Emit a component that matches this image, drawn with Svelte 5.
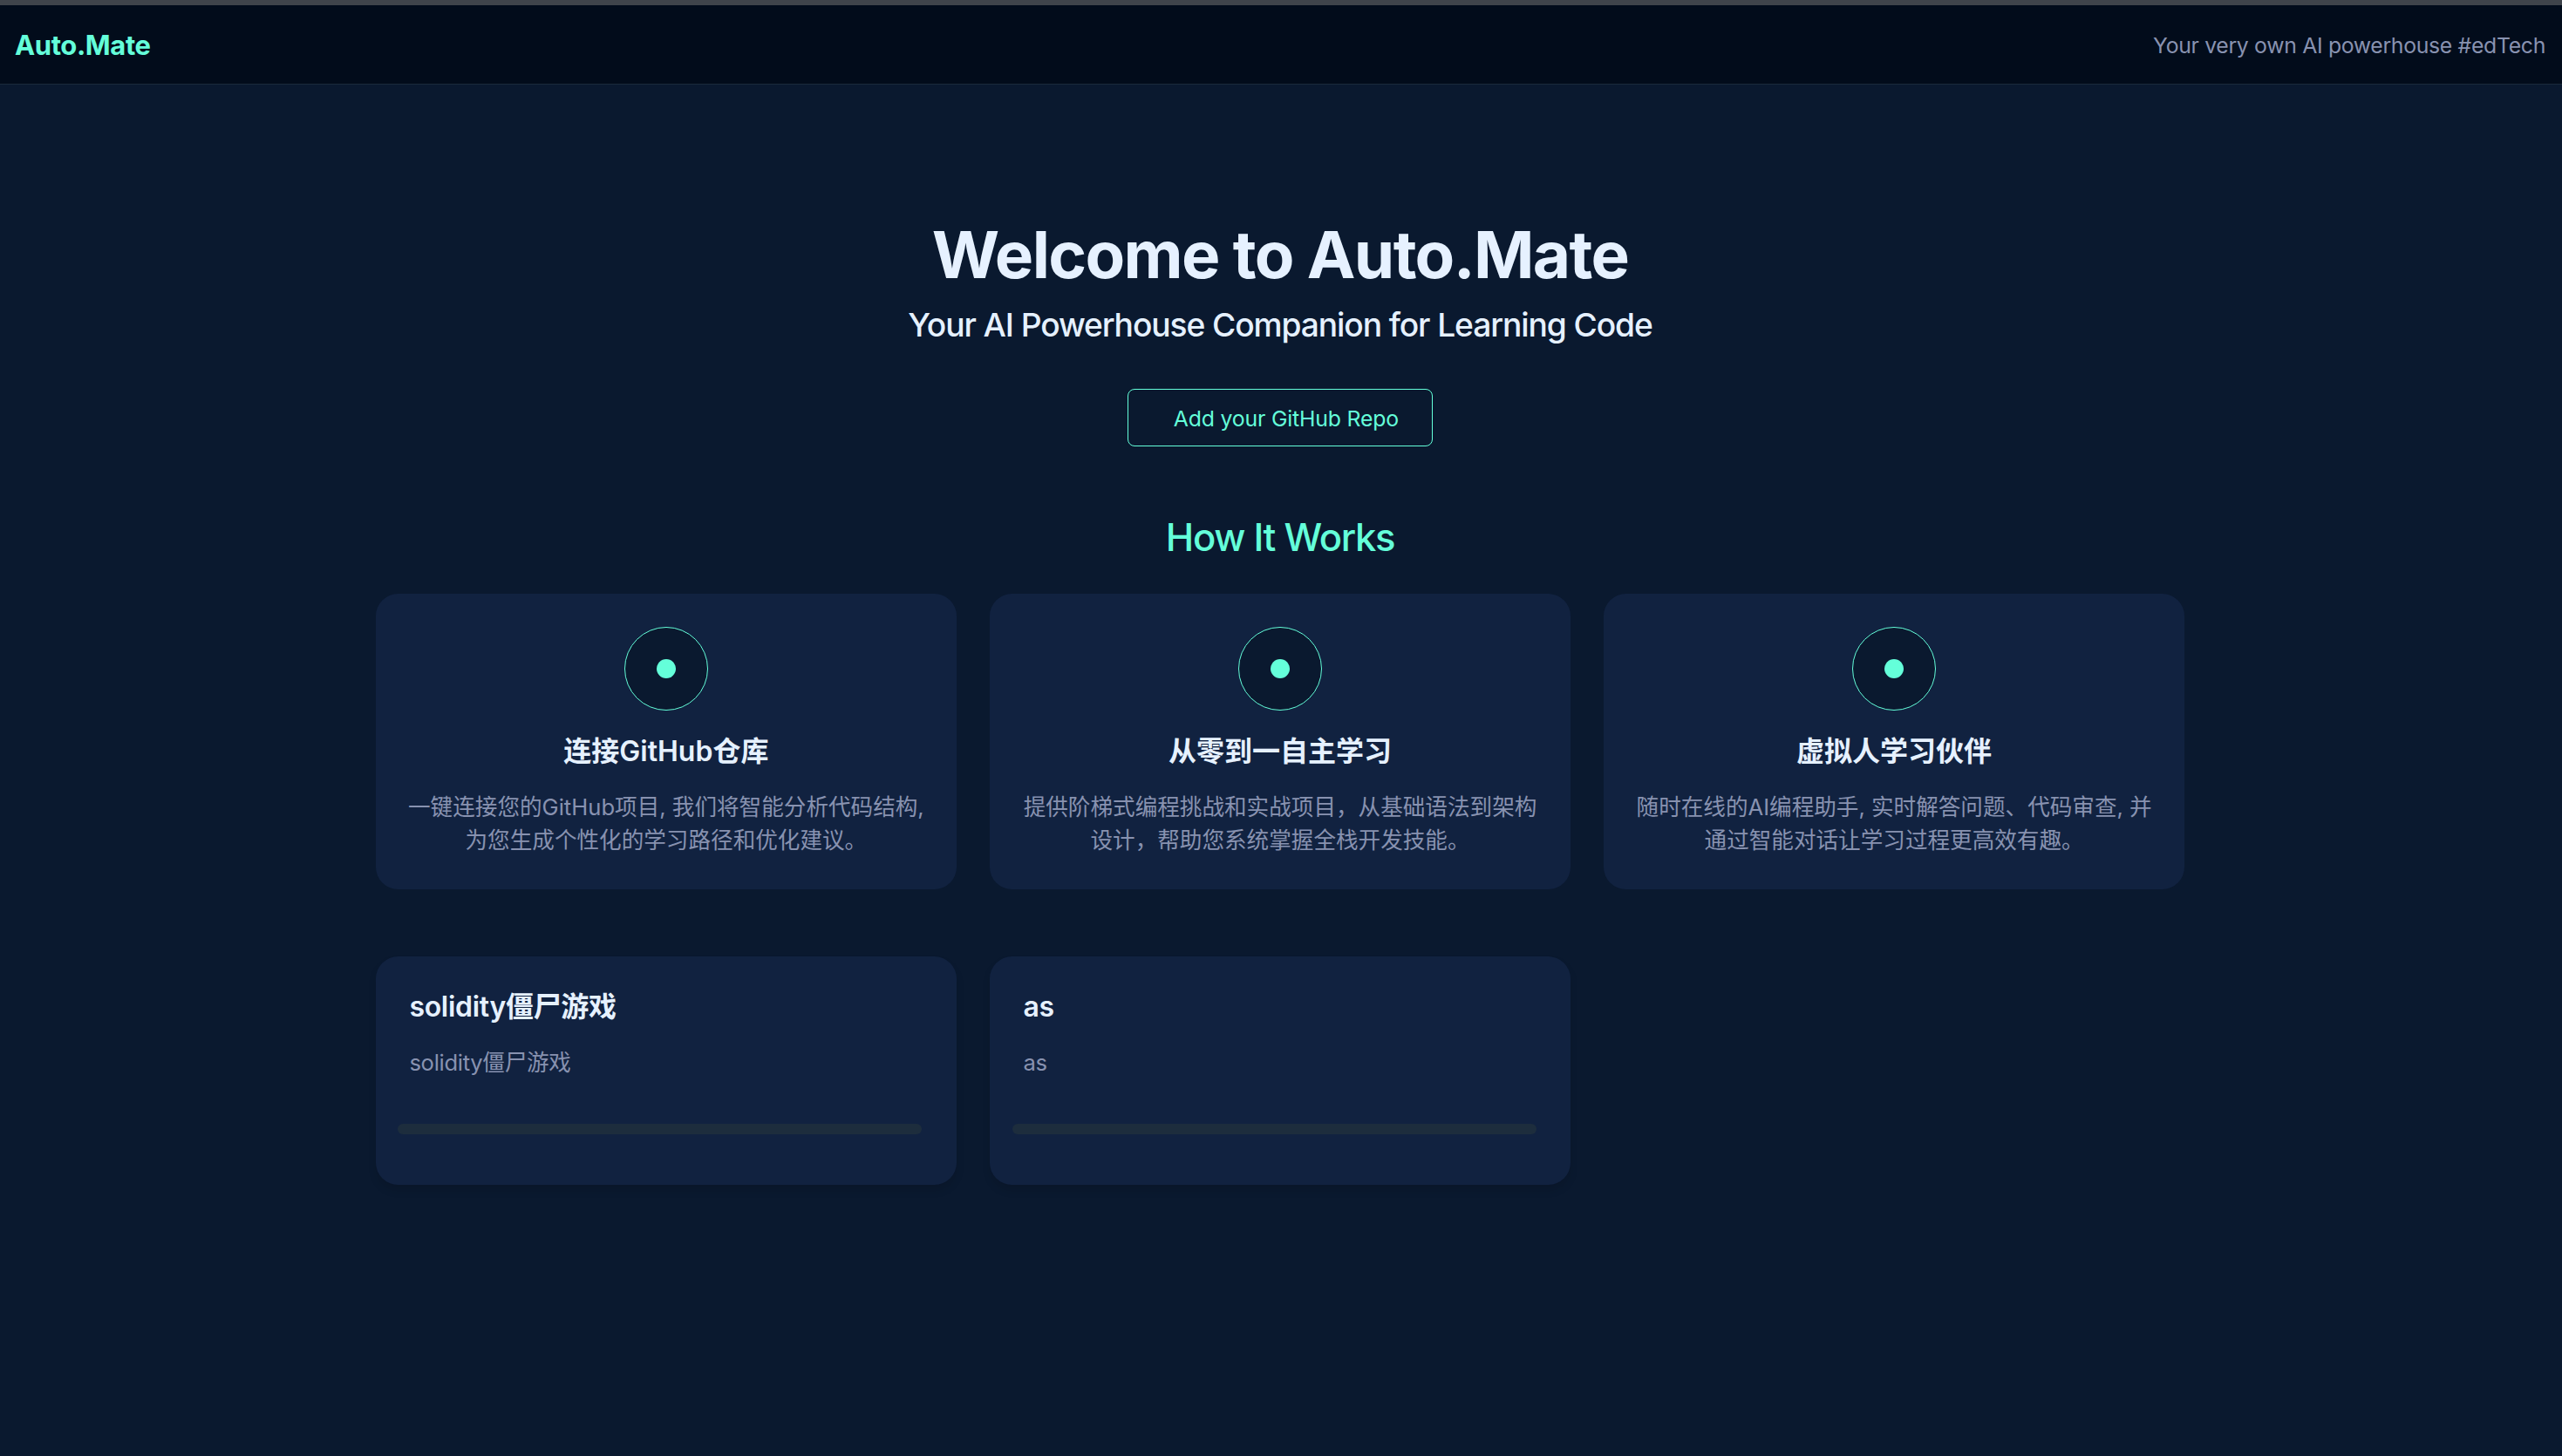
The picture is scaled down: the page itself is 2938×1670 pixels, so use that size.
<script>
  const steps = [
    {
      title: '连接GitHub仓库',
      text: ['一键连接您的GitHub项目, 我们将智能分析代码结构,', '为您生成个性化的学习路径和优化建议。']
    },
    {
      title: '从零到一自主学习',
      text: ['提供阶梯式编程挑战和实战项目，从基础语法到架构', '设计，帮助您系统掌握全栈开发技能。']
    },
    {
      title: '虚拟人学习伙伴',
      text: ['随时在线的AI编程助手, 实时解答问题、代码审查, 并', '通过智能对话让学习过程更高效有趣。']
    }
  ];

  const projects = [
    { name: 'solidity僵尸游戏', description: 'solidity僵尸游戏', progress: 0 },
    { name: 'as', description: 'as', progress: 0 }
  ];
</script>

<div class="page">
  <header class="header">
    <div class="logo">Auto.Mate</div>
    <div class="slogan">Your very own AI powerhouse #edTech</div>
  </header>

  <main class="main">
    <h1 class="title">Welcome to Auto.Mate</h1>
    <p class="subtitle">Your AI Powerhouse Companion for Learning Code</p>
    <button class="repo-btn"><span class="repo-label">Add your GitHub Repo</span></button>

    <h2 class="section-title">How It Works</h2>
    <div class="grid">
      {#each steps as step}
        <section class="card step">
          <div class="icon"><span class="dot"></span></div>
          <h3 class="card-title">{step.title}</h3>
          <p class="card-text">
            {#each step.text as line}
              <span class="line">{line}</span>
            {/each}
          </p>
        </section>
      {/each}
    </div>

    <div class="grid projects">
      {#each projects as project}
        <section class="card project">
          <h3 class="card-title">{project.name}</h3>
          <p class="card-text">{project.description}</p>
          <div class="progress">
            <div class="progress-fill" style="width: {project.progress}%"></div>
          </div>
        </section>
      {/each}
    </div>
  </main>
</div>

<style>
  :global(body) {
    background-color: #0a192f;
  }

  .page {
    box-sizing: border-box;
    min-height: 1670px;
    border-top: 6px solid #3f444b;
    background-color: #0a192f;
    color: #e6f1ff;
    font-family: Inter, "Noto Sans CJK SC", sans-serif;
    font-size: 25.6px;
    line-height: 38.4px;
  }

  h1, h2, h3, p {
    margin: 0;
  }

  .header {
    box-sizing: border-box;
    display: flex;
    align-items: center;
    justify-content: space-between;
    height: 91px;
    padding: 2px 19px 0 17px;
    background-color: #020c1b;
    border-bottom: 1px solid #1b2b3b;
  }

  .logo {
    color: #64ffda;
    font-size: 31px;
    font-weight: 700;
    letter-spacing: -0.4px;
  }

  .slogan {
    color: #8892b0;
    font-size: 24.8px;
    letter-spacing: -0.33px;
  }

  .main {
    display: flex;
    flex-direction: column;
    align-items: center;
    width: 2074px;
    margin: 0 auto;
    padding: 149px 2px 0 0;
  }

  .title {
    font-size: 74.6px;
    font-weight: 700;
    line-height: 92px;
    letter-spacing: -1.65px;
    white-space: nowrap;
  }

  .subtitle {
    margin-top: 12px;
    font-size: 37.2px;
    font-weight: 500;
    line-height: 46px;
    letter-spacing: -1.1px;
    white-space: nowrap;
  }

  .repo-btn {
    display: flex;
    align-items: center;
    justify-content: flex-end;
    box-sizing: border-box;
    width: 350px;
    height: 66px;
    margin-top: 50px;
    padding: 2px 38px 0 0;
    border: 1px solid #64ffda;
    border-radius: 8px;
    background: transparent;
    color: #64ffda;
    font-family: inherit;
    font-size: 24.8px;
    letter-spacing: -0.17px;
    cursor: pointer;
  }

  .section-title {
    margin-top: 78px;
    color: #64ffda;
    font-size: 43.6px;
    font-weight: 500;
    line-height: 54px;
    letter-spacing: -1.3px;
  }

  .grid {
    display: grid;
    grid-template-columns: repeat(3, 1fr);
    gap: 38.4px;
    width: 100%;
    margin-top: 37px;
  }

  .card {
    box-sizing: border-box;
    border-radius: 25.6px;
    background-color: #112240;
  }

  .step {
    display: flex;
    flex-direction: column;
    align-items: center;
    height: 339px;
    padding-top: 38px;
    text-align: center;
  }

  .icon {
    display: flex;
    align-items: center;
    justify-content: center;
    box-sizing: border-box;
    width: 96px;
    height: 96px;
    border: 1px solid #64ffda;
    border-radius: 50%;
    background-color: #0a192f;
  }

  .dot {
    width: 22px;
    height: 22px;
    border-radius: 50%;
    background-color: #64ffda;
  }

  .card-title {
    font-size: 32px;
    font-weight: 600;
    line-height: 48px;
  }

  .step .card-title {
    margin-top: 23px;
  }

  .card-text {
    margin-top: 21px;
    color: #8892b0;
  }

  .line {
    display: block;
    white-space: nowrap;
  }

  .projects {
    margin-top: 77px;
  }

  .project {
    height: 262px;
    padding: 34px 38.4px 0;
    box-shadow: 0 6.4px 9.6px rgba(0, 0, 0, 0.1);
    letter-spacing: -0.3px;
  }

  .progress {
    width: 601px;
    height: 12px;
    margin: 51px 0 0 -13px;
    border-radius: 6px;
    background-color: #1d2d3d;
    overflow: hidden;
  }

  .progress-fill {
    height: 100%;
    background-color: #64ffda;
  }
</style>
